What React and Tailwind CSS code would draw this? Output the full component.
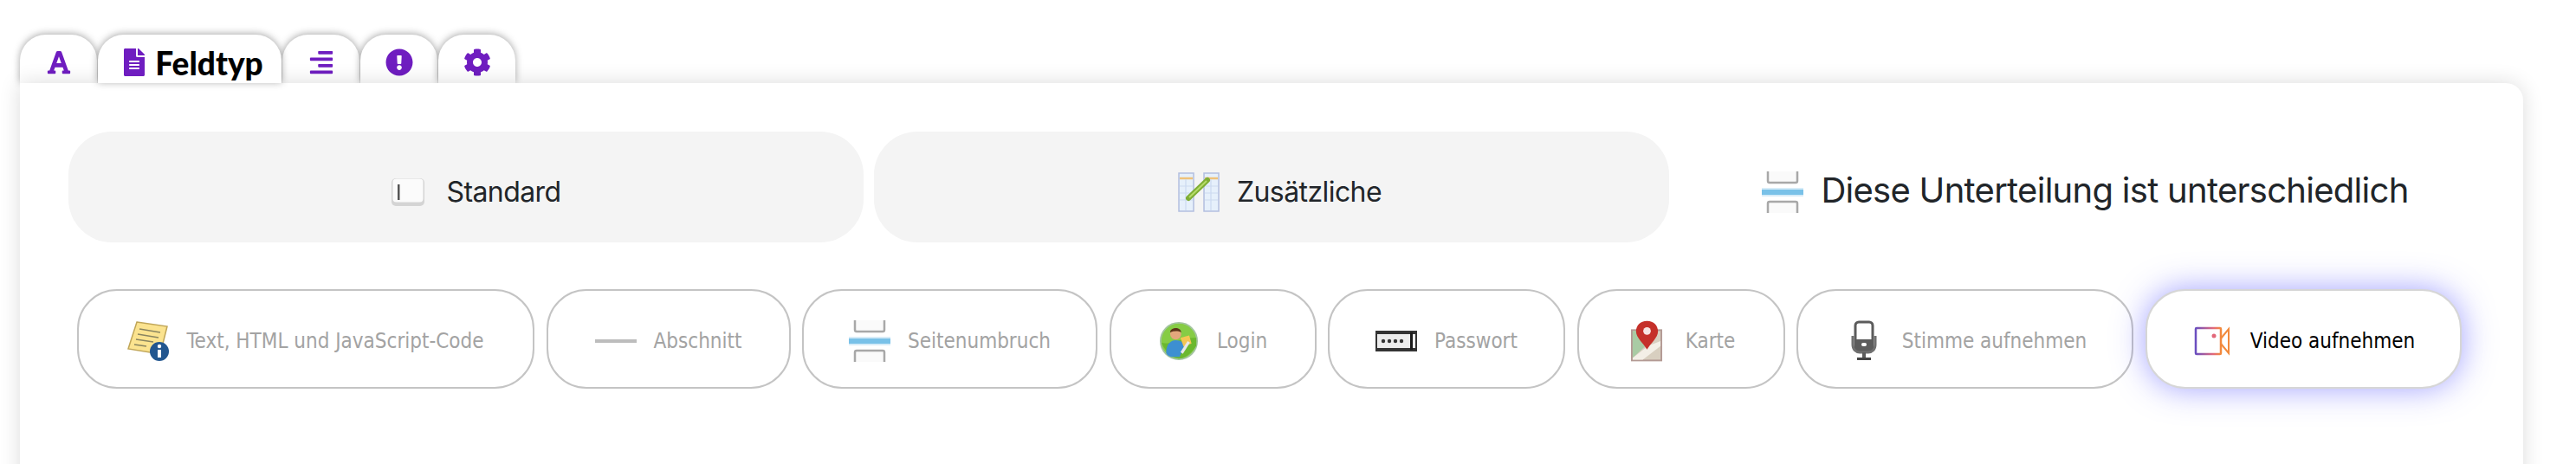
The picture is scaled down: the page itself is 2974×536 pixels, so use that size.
import { FaFont, FaFileAlt, FaAlignRight, FaExclamationCircle, FaCog } from 'react-icons/fa';

const InputIcon = () => (
  <svg viewBox="0 0 40 34" className="w-[40px] h-[34px]">
    <rect x="1" y="1" width="38" height="32" rx="5" fill="#d4d4d4" />
    <rect x="2.500" y="1.500" width="35" height="27" rx="4" fill="#fbfbfb" />
    <rect x="8" y="8" width="2.500" height="18" fill="#555" />
  </svg>
);

const TablesIcon = () => (
  <svg viewBox="0 0 48 46" className="w-[48px] h-[46px]">
    <rect x="1" y="1" width="17" height="44" fill="#e6f0fb" stroke="#b3bfdf" strokeWidth="1.500" />
    <rect x="30" y="1" width="17" height="44" fill="#e6f0fb" stroke="#b3bfdf" strokeWidth="1.500" />
    <path d="M2 7h15M31 7h15" stroke="#efc27a" strokeWidth="2.500" />
    <path d="M2 16h15M2 24h15M2 32h15M31 16h15M31 24h15M31 32h15M9 8v36M38 8v36" stroke="#ccdaf0" strokeWidth="1.200" />
    <path d="M12 30L34 9" stroke="#7fae35" strokeWidth="6" strokeLinecap="round" />
    <path d="M13 29L33 10" stroke="#b6dc68" strokeWidth="2" />
  </svg>
);

const PageBreakIcon = () => (
  <svg viewBox="0 0 48 48" className="w-[48px] h-[48px]">
    <path d="M7 0v11a2 2 0 0 0 2 2h30a2 2 0 0 0 2-2V0" fill="#fafafa" stroke="#a8a8a8" strokeWidth="2.500" />
    <path d="M7 48V37a2 2 0 0 1 2-2h30a2 2 0 0 1 2 2v11" fill="#fafafa" stroke="#a8a8a8" strokeWidth="2.500" />
    <rect x="0" y="19" width="48" height="10" fill="#79c1e8" opacity="0.3" />
    <rect x="0" y="21" width="48" height="6" fill="#79c1e8" />
  </svg>
);

const NoteIcon = () => (
  <svg viewBox="0 0 48 46" className="w-[48px] h-[46px]">
    <path d="M11 1L46 6L38 38L1 32Z" fill="#fbe38f" stroke="#c0a659" strokeWidth="1.500" />
    <path d="M14 9l24 4M12 15l24 4M10 21l20 3M8 27l14 2" stroke="#8a8560" strokeWidth="1.500" />
    <circle cx="37" cy="35" r="11" fill="#22568f" />
    <rect x="35" y="33" width="4" height="9" fill="#fff" />
    <circle cx="37" cy="29" r="2.200" fill="#fff" />
  </svg>
);

const DashIcon = () => <span className="block w-[49px] h-[4px] bg-[#bdbdbd]" />;

const LoginIcon = () => (
  <svg viewBox="0 0 48 48" className="w-[44px] h-[44px]">
    <circle cx="24" cy="24" r="23" fill="#86cc45" stroke="#a3c4a0" strokeWidth="2" />
    <path d="M2 26c10 4 28-8 44-6v10C38 42 30 46 24 46S8 40 2 26Z" fill="#6bb82f" />
    <circle cx="20" cy="15" r="7" fill="#e3a77c" />
    <path d="M13 13c0-6 13-8 14 0-4-2-9-2-14 0Z" fill="#5a3418" />
    <path d="M8 38c0-10 6-15 12-15s10 3 11 7l-6 14H14c-3-1-6-3-6-6Z" fill="#3d8fd1" />
    <path d="M26 20l11-3 3 10-10 4Z" fill="#f4c653" />
    <path d="M26 38l9-14 3 2-9 14Z" fill="#e8e8e8" />
  </svg>
);

const PasswordIcon = () => (
  <svg viewBox="0 0 48 24" className="w-[48px] h-[24px]">
    <rect x="0" y="0" width="48" height="24" fill="#333" />
    <rect x="2" y="4" width="44" height="16" fill="#ececec" />
    <rect x="40" y="2" width="3" height="20" fill="#1c1c1c" />
    <circle cx="9" cy="12" r="2.200" fill="#333" />
    <circle cx="16" cy="12" r="2.200" fill="#333" />
    <circle cx="23" cy="12" r="2.200" fill="#333" />
    <circle cx="30" cy="12" r="2.200" fill="#333" />
  </svg>
);

const MapIcon = () => (
  <svg viewBox="0 0 38 48" className="w-[37px] h-[48px]">
    <rect x="1" y="11" width="35" height="36" fill="#d8cfc0" stroke="#b39a94" strokeWidth="2" />
    <path d="M2 12h15L17 30L2 44Z" fill="#a9cba4" />
    <path d="M2 44L20 30L35 24v6L14 46H2Z" fill="#f3efe7" />
    <path d="M19 0c-8 0-13 5.500-13 12.500C6 20 15 27 19 34c4-7 13-14 13-21.500C32 5.500 27 0 19 0Z" fill="#c5302a" />
    <circle cx="19" cy="12" r="4.500" fill="#f7e4e2" />
  </svg>
);

const MicIcon = () => (
  <svg viewBox="0 0 30 48" className="w-[30px] h-[48px]">
    <rect x="5" y="2" width="20" height="34" rx="4" fill="#fff" stroke="#5c5c5c" strokeWidth="3" />
    <path d="M5 22h20v10a4 4 0 0 1-4 4H9a4 4 0 0 1-4-4Z" fill="#5c5c5c" />
    <rect x="12" y="26" width="6" height="4" rx="2" fill="#fff" />
    <path d="M2 18v10c0 6 4 9 8 9h10c4 0 8-3 8-9V18" fill="none" stroke="#707070" strokeWidth="3" />
    <path d="M15 37v7" stroke="#5c5c5c" strokeWidth="4" />
    <rect x="7" y="43" width="16" height="3" fill="#444" />
  </svg>
);

const VideoIcon = () => (
  <svg viewBox="0 0 42 34" className="w-[42px] h-[34px]" fill="none">
    <defs>
      <linearGradient id="videoGrad" x1="0" y1="0" x2="1" y2="0">
        <stop offset="0" stopColor="#6a4fc0" />
        <stop offset="0.7" stopColor="#e2687a" />
        <stop offset="1" stopColor="#f28a3c" />
      </linearGradient>
    </defs>
    <rect x="2" y="2" width="29" height="30" rx="1" stroke="url(#videoGrad)" strokeWidth="2.500" />
    <path d="M31 14L40 3v28l-9-11" stroke="#f28a3c" strokeWidth="2" />
    <circle cx="23" cy="11" r="2.500" fill="#e2687a" />
  </svg>
);

const fieldTypes = [
  { label: 'Text, HTML und JavaScript-Code', width: 'w-[528px]', icon: <NoteIcon /> },
  { label: 'Abschnitt', width: 'w-[282px]', icon: <DashIcon /> },
  { label: 'Seitenumbruch', width: 'w-[341px]', icon: <PageBreakIcon /> },
  { label: 'Login', width: 'w-[239px]', icon: <LoginIcon /> },
  { label: 'Passwort', width: 'w-[274px]', icon: <PasswordIcon /> },
  { label: 'Karte', width: 'w-[240px]', icon: <MapIcon /> },
  { label: 'Stimme aufnehmen', width: 'w-[389px]', icon: <MicIcon /> },
];

const IconBox = ({ children }) => (
  <span className="flex items-center justify-center w-[48px] h-[48px] shrink-0">{children}</span>
);

const Tab = ({ children, active }) => (
  <div
    className={`flex items-center justify-center h-[56px] rounded-t-[30px] bg-white pt-[8px] text-[#6f1dc0] shadow-[0_-1px_8px_rgba(0,0,0,0.35)] ${
      active ? 'relative z-20 w-[212px] gap-[12px] pl-[9px]' : 'w-[89px]'
    }`}
  >
    {children}
  </div>
);

const App = () => {
  return (
    <div className="h-[536px] overflow-hidden bg-white pt-[40px] pl-[23px] pr-[61px] font-['Inter',sans-serif]">
      {/* Tabs */}
      <div className="flex gap-[1px]">
        <Tab><FaFont className="w-[30px] h-[30px]" /></Tab>
        <Tab active>
          <FaFileAlt className="w-[24px] h-[32px]" />
          <span className="font-['Lato',sans-serif] font-black text-[37px] leading-none text-black">Feldtyp</span>
        </Tab>
        <Tab><FaAlignRight className="w-[30px] h-[30px]" /></Tab>
        <Tab><FaExclamationCircle className="w-[32px] h-[32px]" /></Tab>
        <Tab><FaCog className="w-[32px] h-[32px]" /></Tab>
      </div>

      {/* Card */}
      <div className="relative z-10 h-[500px] rounded-[20px] rounded-tl-none bg-white px-[56px] pt-[56px] shadow-[0_0_24px_rgba(0,0,0,0.14)]">
        <div className="grid grid-cols-3 gap-[12px] text-[#212529]">
          <div className="flex items-center justify-center gap-[20px] h-[128px] rounded-[50px] bg-[#f4f4f4] pt-[12px] pl-[19px]">
            <IconBox><InputIcon /></IconBox>
            <span className="text-[32px] tracking-[-0.018em]">Standard</span>
          </div>
          <div className="flex items-center justify-center gap-[20px] h-[128px] rounded-[50px] bg-[#f4f4f4] pt-[12px] pl-[19px]">
            <IconBox><TablesIcon /></IconBox>
            <span className="text-[32px] tracking-[-0.018em]">Zusätzliche</span>
          </div>
          <div className="flex items-center justify-center gap-[20px] h-[128px] pt-[12px] pl-[19px]">
            <IconBox><PageBreakIcon /></IconBox>
            <span className="text-[40px] tracking-[-0.018em] mb-[4px]">Diese Unterteilung ist unterschiedlich</span>
          </div>
        </div>

        <div className="flex gap-[13.500px] mt-[54px] ml-[10px] font-['DejaVu_Sans',sans-serif] [font-stretch:condensed] text-[24px]">
          {fieldTypes.map((field) => (
            <div
              key={field.label}
              className={`flex items-center justify-center gap-[20px] h-[115px] rounded-[46px] border-2 border-[#c4c4c4] pt-[5px] text-[#a3a3a3] ${field.width}`}
            >
              <IconBox>{field.icon}</IconBox>
              <span className="whitespace-nowrap">{field.label}</span>
            </div>
          ))}
          <div className="flex items-center justify-center gap-[20px] w-[365px] h-[115px] rounded-[46px] border-2 border-[#d6d6d6] bg-white pt-[5px] text-black shadow-[0_0_36px_rgba(70,70,255,0.5)]">
            <IconBox><VideoIcon /></IconBox>
            <span className="whitespace-nowrap">Video aufnehmen</span>
          </div>
        </div>
      </div>
    </div>
  );
};

export default App;
